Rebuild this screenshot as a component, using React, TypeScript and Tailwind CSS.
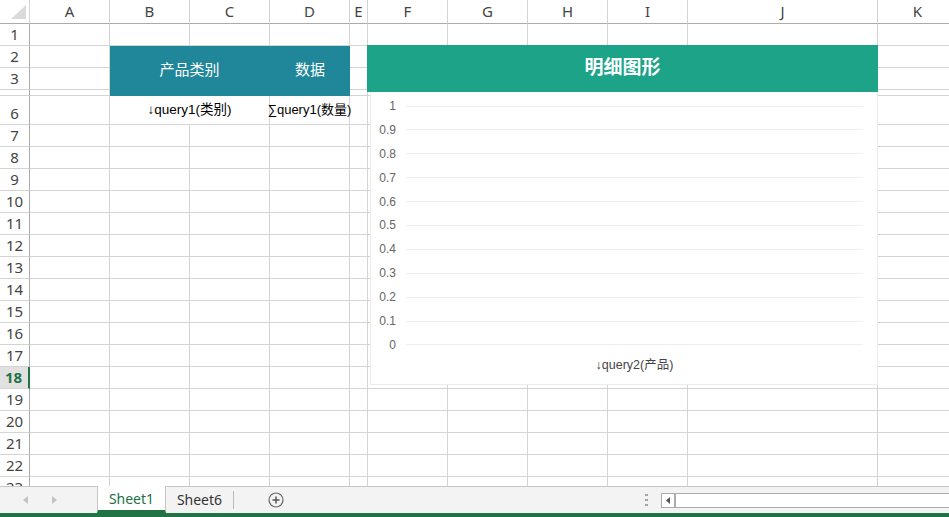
import * as React from 'react'

const COLS = ['A', 'B', 'C', 'D', 'E', 'F', 'G', 'H', 'I', 'J', 'K']

type Row = { label: string; kind?: 'hidden' | 'active' }

const ROWS: Row[] = [
  { label: '1' },
  { label: '2' },
  { label: '3' },
  { label: '', kind: 'hidden' },
  { label: '6' },
  ...Array.from({ length: 17 }, (_, i) => ({
    label: String(i + 7),
    kind: i + 7 === 18 ? ('active' as const) : undefined,
  })),
]

const TICKS = ['1', '0.9', '0.8', '0.7', '0.6', '0.5', '0.4', '0.3', '0.2', '0.1', '0']

const sans = "font-['Noto_Sans','Liberation_Sans',sans-serif]"
const cjk = "font-['Liberation_Sans','Noto_Sans_CJK_SC',sans-serif]"

function Cell({ className = '', children }: { className?: string; children?: React.ReactNode }) {
  return (
    <div className={`border-r border-b border-[#d4d4d4] bg-white ${className}`}>{children}</div>
  )
}

function RowHeader({ row }: { row: Row }) {
  if (row.kind === 'active') {
    return (
      <div className="flex items-end justify-center border-r-2 border-b border-r-[#217346] border-b-[#d4d4d4] bg-[#e1e1e1] pr-px">
        <span className={`${sans} text-[15px] leading-[21px] font-bold text-[#217346]`}>{row.label}</span>
      </div>
    )
  }
  return (
    <div className="flex items-end justify-center border-r border-b border-r-[#ababab] border-b-[#d4d4d4] bg-white">
      <span className={`${sans} text-[15px] leading-[21px] text-[#444]`}>{row.label}</span>
    </div>
  )
}

function SheetGrid() {
  const cells: React.ReactNode[] = []

  // column headers
  cells.push(
    <div key="corner" className="flex items-start justify-end border-r border-b border-r-[#d4d4d4] border-b-[#ababab] bg-white pt-[5px] pr-[3px]">
      <svg width="15" height="15" viewBox="0 0 15 15">
        <polygon points="15,0 15,14 0,14" fill="#dadada" />
      </svg>
    </div>,
  )
  COLS.forEach((c) => {
    cells.push(
      <div
        key={`h-${c}`}
        className={`${sans} flex items-center justify-center border-r border-b border-r-[#d4d4d4] border-b-[#ababab] bg-white text-[15px] text-[#444]`}
      >
        {c}
      </div>,
    )
  })

  ROWS.forEach((row, r) => {
    cells.push(<RowHeader key={`rh-${r}`} row={row} />)
    if (r === 4) {
      cells.push(<Cell key={`c-${r}-A`} />)
      cells.push(
        <Cell key={`c-${r}-BC`} className="col-span-2 flex items-center justify-center">
          <span className={`${cjk} text-[13.5px] text-black`}>
            <span className="font-bold">↓</span>query1(类别)
          </span>
        </Cell>,
      )
      cells.push(
        <Cell key={`c-${r}-D`} className="flex items-center justify-center overflow-visible">
          <span className={`${cjk} relative z-10 text-[13px] whitespace-nowrap text-black`}>∑query1(数量)</span>
        </Cell>,
      )
      COLS.slice(4).forEach((c) => cells.push(<Cell key={`c-${r}-${c}`} />))
      return
    }
    COLS.forEach((c, ci) => {
      // B2:D5 is merged into the header block
      if (r >= 1 && r <= 3 && ci >= 1 && ci <= 3) return
      cells.push(<Cell key={`c-${r}-${c}`} />)
    })
  })

  return (
    <div className="grid grid-cols-[30px_80px_80px_80px_80px_18px_80px_80px_80px_80px_190px_80px] grid-rows-[24px_22px_22px_22px_6px_29px_repeat(17,22px)]">
      <div className="col-span-3 col-start-3 row-span-3 row-start-3 -mt-px -ml-px flex bg-[#208699]">
        <div className="flex w-[161px] items-center justify-center">
          <span className={`${cjk} text-[15px] text-white`}>产品类别</span>
        </div>
        <div className="flex flex-1 items-center justify-center">
          <span className={`${cjk} text-[15px] text-white`}>数据</span>
        </div>
      </div>
      {cells}
    </div>
  )
}

function Chart() {
  return (
    <div className="absolute top-[45px] left-[367px] flex w-[511px] flex-col">
      <div className="flex h-[47px] items-center justify-center bg-[#1da388]">
        <span className={`${cjk} text-[19px] font-bold text-white`}>明细图形</span>
      </div>
      <div className="ml-[3px] flex h-[293px] flex-col border-x border-b border-[#ececec] bg-white pt-[6px]">
        <div className="flex h-[255px] flex-col justify-between">
          {TICKS.map((t) => (
            <div key={t} className="flex h-[16px] items-center">
              <span className="w-[25px] text-right font-['Liberation_Sans',sans-serif] text-[12px] text-[#666]">
                {t}
              </span>
              <div className="mr-[14px] ml-[10px] h-px flex-1 bg-[#efefef]" />
            </div>
          ))}
        </div>
        <div className="mt-[3px] mr-[14px] ml-[35px] flex justify-center">
          <span className={`${cjk} text-[12.5px] text-[#444]`}>
            <span className="font-bold">↓</span>query2(产品)
          </span>
        </div>
      </div>
    </div>
  )
}

function TabBar() {
  return (
    <div className="flex h-[27px] items-stretch border-t border-[#c6c6c6] bg-[#f3f3f3]">
      <div className="flex w-[97px] items-center gap-[24px] pl-[23px]">
        <svg width="5" height="8" viewBox="0 0 5 8">
          <polygon points="5,0 5,8 0,4" fill="#c3c3c3" />
        </svg>
        <svg width="5" height="8" viewBox="0 0 5 8">
          <polygon points="0,0 0,8 5,4" fill="#c3c3c3" />
        </svg>
      </div>
      <div className="-mt-px flex w-[69px] items-center justify-center border-x border-b-[3px] border-x-[#c6c6c6] border-b-[#217346] bg-white">
        <span className={`${sans} text-[14px] text-[#217346]`}>Sheet1</span>
      </div>
      <div className="flex w-[67px] items-center justify-center pb-[2px]">
        <span className={`${sans} text-[14px] text-[#333]`}>Sheet6</span>
      </div>
      <div className="my-[4px] w-px bg-[#bdbdbd]" />
      <div className="flex w-[84px] items-center justify-center pb-px">
        <svg width="16" height="16" viewBox="0 0 16 16">
          <circle cx="8" cy="8" r="7" fill="none" stroke="#666" strokeWidth="1.2" />
          <path d="M8 4.5v7M4.5 8h7" stroke="#555" strokeWidth="1.5" />
        </svg>
      </div>
      <div className="flex-1" />
      <div className="flex w-[30px] items-center justify-center">
        <svg width="3" height="12" viewBox="0 0 3 12">
          <rect x="0" y="0" width="3" height="2" fill="#a6a6a6" />
          <rect x="0" y="5" width="3" height="2" fill="#a6a6a6" />
          <rect x="0" y="10" width="3" height="2" fill="#a6a6a6" />
        </svg>
      </div>
      <div className="flex w-[288px] items-center">
        <div className="flex h-[15px] w-full border border-r-0 border-[#ababab] bg-white">
          <div className="flex w-[14px] items-center justify-center border-r-2 border-[#ababab]">
            <svg width="4" height="7" viewBox="0 0 4 7">
              <polygon points="4,0 4,7 0,3.5" fill="#555" />
            </svg>
          </div>
        </div>
      </div>
    </div>
  )
}

export default function App() {
  return (
    <div className="flex h-[517px] w-[949px] flex-col overflow-hidden bg-white">
      <div className="relative h-[486px] overflow-hidden">
        <SheetGrid />
        <Chart />
      </div>
      <TabBar />
      <div className="h-[4px] bg-[#217346]" />
    </div>
  )
}
